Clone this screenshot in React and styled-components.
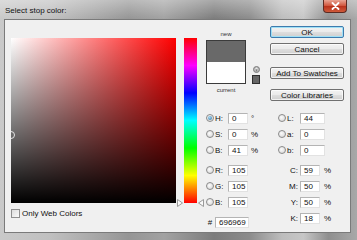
import React from 'react';
import styled, { createGlobalStyle, css } from 'styled-components';

const FONT = `"Liberation Sans", Arial, sans-serif`;

const GlobalStyle = createGlobalStyle`
  html, body {
    margin: 0;
    padding: 0;
  }

  body {
    width: 357px;
    height: 240px;
    overflow: hidden;
    font-family: ${FONT};
  }
`;

const HSB = [
  { key: 'H', value: '0', unit: '°', checked: true },
  { key: 'S', value: '0', unit: '%' },
  { key: 'B', value: '41', unit: '%' }
];

const RGB = [
  { key: 'R', value: '105' },
  { key: 'G', value: '105' },
  { key: 'B', value: '105' }
];

const LAB = [
  { key: 'L', value: '44' },
  { key: 'a', value: '0' },
  { key: 'b', value: '0' }
];

const CMYK = [
  { key: 'C', value: '59' },
  { key: 'M', value: '50' },
  { key: 'Y', value: '50' },
  { key: 'K', value: '18' }
];

const BRIGHTNESS = 41;
const FIELD_SIZE = 165;

const Window = styled.div`
  display: flex;
  flex-direction: column;
  width: 357px;
  height: 240px;
  box-sizing: border-box;
  padding: 0 6px 7px 4px;

  background:
    linear-gradient(to bottom, rgba(255, 255, 255, 0.35), rgba(255, 255, 255, 0) 19px),
    linear-gradient(
      to right,
      #c9c9c9 0%,
      #c0c0c0 14%,
      #a9a9a9 26%,
      #959595 36%,
      #a2a2a2 46%,
      #7c7c7c 60%,
      #8c8c8c 70%,
      #bdbdbd 79%,
      #c6c6c6 85%,
      #8f8f8f 92%,
      #a8a8a8 100%
    );
`;

const TitleBar = styled.div`
  display: flex;
  align-items: flex-start;
  height: 19px;
  flex: 0 0 auto;
`;

const Title = styled.div`
  padding: 6px 0 0 1px;

  font-size: 8px;
  line-height: 10px;
  color: #111;
`;

const CloseButton = styled.div`
  display: flex;
  align-items: center;
  justify-content: center;

  width: 24px;
  height: 13px;
  box-sizing: border-box;
  margin-left: auto;
  margin-right: 4px;

  border: 1px solid #5c2a22;
  border-top: none;
  border-radius: 0 0 4px 4px;
  background: linear-gradient(#e9a493, #d0553c 48%, #b9311b 52%, #cf5a3a);
`;

const Client = styled.div`
  display: flex;
  align-items: flex-start;
  flex: 1 1 auto;

  border: 1px solid #7a7a7a;
  background-color: #f0f0f0;
`;

const LeftCol = styled.div`
  display: flex;
  flex-direction: column;
  padding: 18px 0 0 6px;
`;

const Field = styled.div`
  position: relative;
  overflow: hidden;

  width: ${FIELD_SIZE}px;
  height: ${FIELD_SIZE}px;

  background:
    linear-gradient(to top, #000, rgba(0, 0, 0, 0)),
    linear-gradient(to right, #fff, #f00);
`;

const FieldMarker = styled.div`
  position: absolute;
  left: -4px;

  width: 8px;
  height: 8px;
  box-sizing: border-box;

  border: 1px solid #e6e6e6;
  border-radius: 50%;
`;

const CheckRow = styled.div`
  display: flex;
  align-items: center;
  margin-top: 6px;

  font-size: 8px;
  color: #111;
`;

const CheckBox = styled.div`
  width: 9px;
  height: 9px;
  box-sizing: border-box;
  margin-right: 2px;

  border: 1px solid #8f8f8f;
  background: linear-gradient(135deg, #dcdcdc, #fafafa);
`;

const HueSlider = styled.div`
  position: relative;

  width: 13px;
  height: ${FIELD_SIZE}px;
  margin: 18px 0 0 8px;

  background: linear-gradient(
    to bottom,
    #f00 0%,
    #f0f 16.67%,
    #00f 33.33%,
    #0ff 50%,
    #0f0 66.67%,
    #ff0 83.33%,
    #f00 100%
  );
`;

const Arrow = styled.svg`
  position: absolute;
  bottom: -4px;
  ${props =>
    props.side === 'left'
      ? css`
          left: -7px;
        `
      : css`
          right: -7px;
        `}
`;

const RightArea = styled.div`
  display: flex;
  flex-direction: column;
  flex: 1 1 auto;
  margin-left: 8px;
`;

const TopRow = styled.div`
  display: flex;
  height: 90px;
`;

const SwatchCol = styled.div`
  display: flex;
  flex-direction: column;
  width: 64px;
  padding: 10px 0 0 1px;
`;

const TinyLabel = styled.div`
  width: 40px;
  height: 8px;

  font-size: 6px;
  line-height: 8px;
  text-align: center;
  color: #333;

  margin-${props => (props.below ? 'top' : 'bottom')}: 2px;
`;

const SwatchRow = styled.div`
  display: flex;
  align-items: flex-end;
`;

const Swatch = styled.div`
  display: flex;
  flex-direction: column;

  width: 40px;
  height: 44px;
  box-sizing: border-box;

  border: 1px solid #3b3b3b;
`;

const SwatchHalf = styled.div`
  flex: 1 1 0;
  background-color: ${props => props.color};
`;

const WarnCol = styled.div`
  display: flex;
  flex-direction: column;
  align-items: center;
  margin-left: 6px;
`;

const WebSwatch = styled.div`
  width: 8px;
  height: 9px;
  box-sizing: border-box;
  margin-top: 2px;

  border: 1px solid #2e2e2e;
  background-color: #666666;
`;

const ButtonCol = styled.div`
  display: flex;
  flex-direction: column;
  padding-top: 6px;
`;

const Button = styled.div`
  display: flex;
  align-items: center;
  justify-content: center;

  width: 74px;
  height: 12px;
  box-sizing: border-box;
  margin-bottom: ${props => props.gap || 0}px;

  border: 1px solid ${props => (props.focused ? '#3d7bad' : '#707070')};
  border-radius: 2px;
  background: linear-gradient(#f2f2f2 0%, #ebebeb 45%, #dddddd 55%, #cfcfcf 100%);
  box-shadow: inset 0 0 0 1px ${props => (props.focused ? '#9fe0f6' : 'rgba(255,255,255,0.7)')};

  font-size: 8px;
  color: #111;
`;

const Fields = styled.div`
  display: flex;
`;

const FieldGroup = styled.div`
  display: flex;
  flex-direction: column;
  width: ${props => props.width || 'auto'};
`;

const Row = styled.div`
  display: flex;
  align-items: center;
  height: 16px;
  margin-top: ${props => props.gap || 0}px;

  font-size: 8px;
  color: #111;
`;

const Radio = styled.div`
  display: flex;
  align-items: center;
  justify-content: center;

  width: 8px;
  height: 8px;
  box-sizing: border-box;
  margin-left: ${props => props.offset || 0}px;
  margin-right: 1px;

  border: 1px solid #8a8a8a;
  border-radius: 50%;
  background: radial-gradient(circle at 40% 40%, #fbfbfb, #d3d3d3);

  ${props =>
    props.checked &&
    css`
      &::after {
        content: '';
        width: 4px;
        height: 4px;
        border-radius: 50%;
        background: radial-gradient(circle at 40% 35%, #a8dcf7, #2a6e9c);
      }
    `}
`;

const Key = styled.div`
  width: ${props => props.width || 13}px;
  box-sizing: border-box;
  padding-right: ${props => props.padRight || 0}px;
  text-align: ${props => props.align || 'left'};
`;

const Input = styled.div`
  display: flex;
  align-items: center;

  width: ${props => props.width || 20}px;
  height: 11px;
  box-sizing: border-box;
  padding-left: 3px;

  border: 1px solid;
  border-color: #b4b4b4 #e2e2e2 #e2e2e2 #b4b4b4;
  background-color: #fff;

  font-size: 8px;
  color: #111;
`;

const Unit = styled.div`
  margin-left: ${props => props.offset || 3}px;
`;

function ValueRow({ item, gap, offset, width }) {
  return (
    <Row gap={gap}>
      <Radio checked={item.checked} offset={offset} />
      <Key>{item.key}:</Key>
      <Input width={width}>{item.value}</Input>
      {item.unit && <Unit>{item.unit}</Unit>}
    </Row>
  );
}

function CloseIcon() {
  return (
    <svg width="9" height="8" viewBox="0 0 9 8">
      <path
        d="M1.5 1 L7.5 7 M7.5 1 L1.5 7"
        stroke="#fff"
        strokeWidth="1.8"
        strokeLinecap="round"
      />
    </svg>
  );
}

function WebIcon() {
  return (
    <svg width="7" height="7" viewBox="0 0 7 7">
      <circle cx="3.5" cy="3.5" r="3" fill="#b9b9b9" stroke="#7d7d7d" />
      <path d="M2 2.5 L3.5 1.6 L5 2.5 L3.5 3.4 Z" fill="#e8e8e8" />
      <path d="M3.5 3.4 V5.4" stroke="#6d6d6d" strokeWidth="0.8" />
    </svg>
  );
}

function HueArrow({ side }) {
  const d = side === 'left' ? 'M0.5 0.5 L5.5 4 L0.5 7.5 Z' : 'M5.5 0.5 L0.5 4 L5.5 7.5 Z';
  return (
    <Arrow side={side} width="6" height="8" viewBox="0 0 6 8">
      <path d={d} fill="#fafafa" stroke="#9a9a9a" />
    </Arrow>
  );
}

export default function App() {
  const markerTop = Math.round(FIELD_SIZE * (1 - BRIGHTNESS / 100)) - 4;

  return (
    <>
      <GlobalStyle />
      <Window>
        <TitleBar>
          <Title>Select stop color:</Title>
          <CloseButton>
            <CloseIcon />
          </CloseButton>
        </TitleBar>
        <Client>
          <LeftCol>
            <Field>
              <FieldMarker style={{ top: markerTop }} />
            </Field>
            <CheckRow>
              <CheckBox />
              Only Web Colors
            </CheckRow>
          </LeftCol>

          <HueSlider>
            <HueArrow side="left" />
            <HueArrow side="right" />
          </HueSlider>

          <RightArea>
            <TopRow>
              <SwatchCol>
                <TinyLabel>new</TinyLabel>
                <SwatchRow>
                  <Swatch>
                    <SwatchHalf color="#696969" />
                    <SwatchHalf color="#ffffff" />
                  </Swatch>
                  <WarnCol>
                    <WebIcon />
                    <WebSwatch />
                  </WarnCol>
                </SwatchRow>
                <TinyLabel below>current</TinyLabel>
              </SwatchCol>

              <ButtonCol>
                <Button focused gap={5}>OK</Button>
                <Button gap={12}>Cancel</Button>
                <Button gap={10}>Add To Swatches</Button>
                <Button>Color Libraries</Button>
              </ButtonCol>
            </TopRow>

            <Fields>
              <FieldGroup width="73px">
                {HSB.map(item => (
                  <ValueRow key={item.key} item={item} offset={1} />
                ))}
                {RGB.map((item, i) => (
                  <ValueRow key={'rgb' + item.key} item={item} offset={1} gap={i === 0 ? 4 : 0} />
                ))}
                <Row gap={4}>
                  <Key width={10} padRight={0} align="center">#</Key>
                  <Input width={34}>696969</Input>
                </Row>
              </FieldGroup>

              <FieldGroup>
                {LAB.map(item => (
                  <ValueRow key={item.key} item={item} width={25} />
                ))}
                {CMYK.map((item, i) => (
                  <Row key={item.key} gap={i === 0 ? 4 : 0}>
                    <Key width={22} padRight={2} align="right">
                      {item.key}:
                    </Key>
                    <Input>{item.value}</Input>
                    <Unit offset={4}>%</Unit>
                  </Row>
                ))}
              </FieldGroup>
            </Fields>
          </RightArea>
        </Client>
      </Window>
    </>
  );
}
